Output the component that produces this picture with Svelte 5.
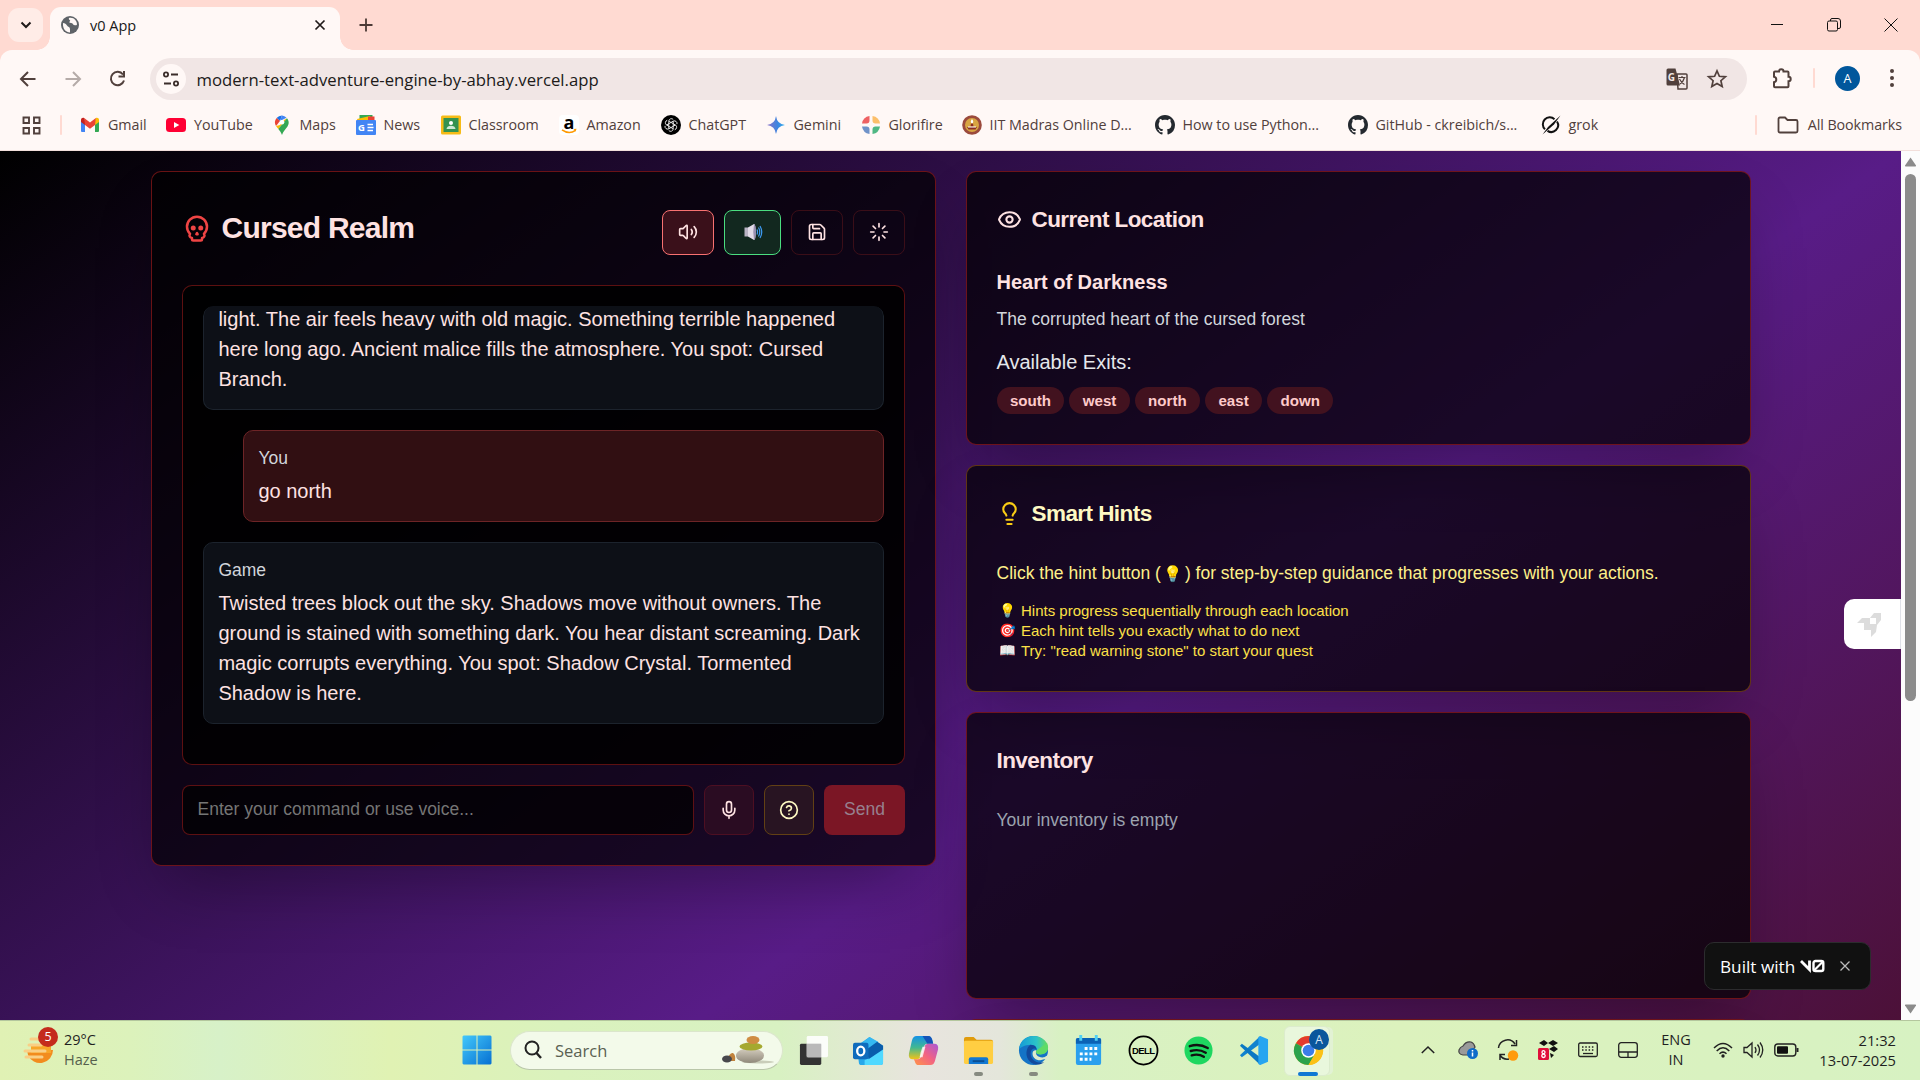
<script>
  const bookmarks = [
    { icon: 'gmail', label: 'Gmail', width: 86 },
    { icon: 'youtube', label: 'YouTube', width: 105.5 },
    { icon: 'maps', label: 'Maps', width: 84 },
    { icon: 'news', label: 'News', width: 85 },
    { icon: 'classroom', label: 'Classroom', width: 118 },
    { icon: 'amazon', label: 'Amazon', width: 102 },
    { icon: 'chatgpt', label: 'ChatGPT', width: 105 },
    { icon: 'gemini', label: 'Gemini', width: 95 },
    { icon: 'glorifire', label: 'Glorifire', width: 101 },
    { icon: 'iit', label: 'IIT Madras Online D...', width: 193 },
    { icon: 'github', label: 'How to use Python...', width: 193 },
    { icon: 'github', label: 'GitHub - ckreibich/s...', width: 193 },
    { icon: 'grok', label: 'grok', width: 80 }
  ];
  const exits = ['south', 'west', 'north', 'east', 'down'];
  const tips = [
    ['💡', 'Hints progress sequentially through each location'],
    ['🎯', 'Each hint tells you exactly what to do next'],
    ['📖', 'Try: "read warning stone" to start your quest']
  ];
  const apps = ['taskview', 'outlook', 'copilot', 'folder', 'edge', 'calendar', 'dell', 'spotify', 'vscode', 'chrome'];
</script>

{#snippet favicon(name)}
  <svg class="fav" viewBox="0 0 20 20">
    {#if name === 'gmail'}
      <path d="M1 4.500V16a1 1 0 0 0 1 1h3V9z" fill="#4285f4" />
      <path d="M19 4.500V16a1 1 0 0 1-1 1h-3V9z" fill="#34a853" />
      <path d="M15 5v5l4-3V4.800c0-1.800-2-2.600-3.300-1.600z" fill="#fbbc04" />
      <path d="M1 4.800V7l4 3V5l-.7-1.800C3 2.200 1 3 1 4.800z" fill="#c5221f" />
      <path d="M4.200 3.100 10 7.500l5.800-4.400L15 10l-5 3.800L5 10z" fill="#ea4335" />
    {:else if name === 'youtube'}
      <rect x="0" y="3" width="20" height="14" rx="3.500" fill="#ff0033" />
      <path d="m8 7 5.300 3L8 13z" fill="#fff" />
    {:else if name === 'maps'}
      <path d="M10 .5a7 7 0 0 0-5.400 2.500L8 6z" fill="#1a73e8" />
      <path d="M10 .5 8 6l6.500-3.300A7 7 0 0 0 10 .5z" fill="#4285f4" />
      <path d="M4.600 3A7 7 0 0 0 4 11l4-5z" fill="#ea4335" />
      <path d="M4 11c.7 1.200 1.500 2.100 2.300 3L15 3.200l-2.700 1.500L8 10z" fill="#fbbc04" />
      <path d="M15 3.200 6.300 14c1.700 2 2.700 3.300 3.700 6 1.200-4 3.500-5.500 5.500-8.500A7 7 0 0 0 15 3.200z" fill="#34a853" />
      <circle cx="10" cy="7.200" r="2.300" fill="#fff" />
    {:else if name === 'news'}
      <rect x="3.500" y="0" width="13" height="8" fill="#34a853" />
      <path d="m1 4 13-3 2 6H2z" fill="#fbbc04" /><path d="M12 1.500h6.500V7H12z" fill="#ea4335" />
      <rect x="0" y="5" width="20" height="15" rx="1" fill="#4285f4" />
      <text x="2" y="15.800" class="news-g">G</text>
      <path d="M11.500 9.500H17M11.500 12.500h6M11.500 15.500H17" stroke="#fff" stroke-width="1.500" />
    {:else if name === 'classroom'}
      <rect width="20" height="19" y=".5" rx="1.500" fill="#f6bb16" /><rect x="2.500" y="3" width="15" height="14" fill="#34924f" />
      <circle cx="10" cy="8" r="2" fill="#fff" /><path d="M5.500 14c0-4.500 9-4.500 9 0z" fill="#cfe8d5" />
    {:else if name === 'amazon'}
      <rect width="20" height="20" rx="4" fill="#fff" />
      <text x="10" y="13.500" text-anchor="middle" class="amazon-a">a</text>
      <path d="M3 14.800q7 5 13.500.6" stroke="#ff9900" stroke-width="1.600" fill="none" /><path d="m14.500 14 3-.2-.8 2.700" fill="#ff9900" />
    {:else if name === 'chatgpt'}
      <circle cx="10" cy="10" r="10" fill="#000" />
      <g fill="none" stroke="#fff" stroke-width=".8">
        {#each [0, 60, 120, 180, 240, 300] as a}
          <path transform="rotate({a} 10 10)" d="M7.800 8.700V6a2.600 2.600 0 0 1 4.400-1.600M7.800 6.200l4.400 2.500" />
        {/each}
      </g>
    {:else if name === 'gemini'}
      <defs><linearGradient id="gem"><stop offset="0" stop-color="#8b72c8" /><stop offset=".6" stop-color="#3b86e0" /><stop offset="1" stop-color="#31b0ee" /></linearGradient></defs>
      <path d="M10 1q1 8 9 9-8 1-9 9-1-8-9-9 8-1 9-9z" fill="url(#gem)" />
    {:else if name === 'glorifire'}
      <path d="M8.500 1v4.500a3 3 0 0 1-3 3H1q1-6.500 7.500-7.500z" fill="#ee6163" /><path d="M11.500 1v4.500a3 3 0 0 0 3 3H19q-1-6.500-7.500-7.500z" fill="#fcbf6a" />
      <path d="M8.500 19v-4.500a3 3 0 0 0-3-3H1q1 6.500 7.500 7.500z" fill="#6f92c8" /><path d="M11.500 19v-4.500a3 3 0 0 1 3-3H19q-1 6.500-7.500 7.500z" fill="#50b783" />
    {:else if name === 'iit'}
      <circle cx="10" cy="10" r="9.800" fill="#9b4a3c" /><circle cx="10" cy="10" r="7" fill="#d8a542" />
      <path d="M5 12h10l-1.500 2.500h-7zM8.500 11.500h3l-.5-3h-2z" fill="#8a2d22" /><path d="M10 4q2.500 3 0 4.500-2.500-1.500 0-4.500z" fill="#fff" /><path d="M6 12h8" stroke="#fff" />
    {:else if name === 'github'}
      <path fill="#24292f" transform="scale(1.250)" d="M8 0C3.580 0 0 3.580 0 8c0 3.540 2.290 6.530 5.470 7.590.4.070.55-.17.55-.38 0-.19-.010-.82-.010-1.490-2.010.37-2.530-.49-2.690-.94-.09-.23-.48-.94-.82-1.130-.28-.15-.68-.52-.010-.53.63-.010 1.080.58 1.230.82.72 1.210 1.870.87 2.330.66.070-.52.28-.87.51-1.070-1.780-.2-3.640-.89-3.640-3.950 0-.87.31-1.590.82-2.150-.08-.2-.36-1.020.08-2.120 0 0 .67-.21 2.200.82.64-.18 1.320-.27 2-.27s1.360.09 2 .27c1.530-1.040 2.200-.82 2.200-.82.44 1.100.16 1.920.08 2.120.51.56.82 1.270.82 2.150 0 3.070-1.870 3.750-3.650 3.950.29.25.54.73.54 1.480 0 1.070-.010 1.930-.010 2.200 0 .21.150.46.550.38A8.010 8.010 0 0 0 16 8c0-4.420-3.580-8-8-8z" />
    {:else if name === 'grok'}
      <path d="M13.500 4.200A6.800 6.800 0 0 0 4 14.300M6.500 15.800A6.800 6.800 0 0 0 16 6.500" fill="none" stroke="#111" stroke-width="2" />
      <path d="M1.500 19.500 7 12 19.500.5 13 9.500z" fill="#111" />
    {/if}
  </svg>
{/snippet}

{#snippet appicon(name)}
  <svg class="appicon" viewBox="0 0 32 32">
    {#if name === 'taskview'}
      <rect x="2" y="9" width="22" height="22" rx="1.500" fill="#333" /><rect x="9" y="1" width="22" height="22" rx="1.500" fill="#fff" opacity=".88" /><path d="M9 9h15v14H9z" fill="#b9b9b9" />
    {:else if name === 'outlook'}
      <path d="M4 11 17 2l14 9v17a3 3 0 0 1-3 3H9a3 3 0 0 1-3-3z" fill="#28a8ea" /><path d="m6 11 11-9 9 5-14 10z" fill="#35b8f1" /><path d="m12 26 19-15v17a3 3 0 0 1-3 3H12z" fill="#50d9ff" /><path d="m14 15 11-8 6 4v4L16 25z" fill="#0a5dab" />
      <rect x="0" y="8" width="16" height="17" rx="2" fill="#0f6cbd" /><ellipse cx="8" cy="16.500" rx="3.700" ry="4.500" fill="none" stroke="#fff" stroke-width="2.400" />
    {:else if name === 'copilot'}
      <defs>
        <linearGradient id="cp1" x1="0" y1="0" x2="0" y2="1"><stop offset="0" stop-color="#1591e8" /><stop offset=".5" stop-color="#42b890" /><stop offset="1" stop-color="#f2c318" /></linearGradient>
        <linearGradient id="cp2" x1="0" y1="1" x2="1" y2="0"><stop offset="0" stop-color="#ff9548" /><stop offset=".5" stop-color="#f26383" /><stop offset="1" stop-color="#a958d8" /></linearGradient>
      </defs>
      <path d="M9 1h12q3 0 4 4l1 4h-6q-3 0-4 4l-3 9q-1 3-4 3H5q-5 0-4-6L4 6q1-5 5-5z" fill="url(#cp1)" />
      <path d="M9 1h12q3 0 4 4l1 4h-6L15 1z" fill="#1554b8" />
      <path d="M23 31H11q-3 0-4-4l-1-2h4q3 0 4-4l3-9q1-3 4-3h6q5 0 4 6l-3 11q-1 5-5 5z" fill="url(#cp2)" />
      <path d="m13 18 2-6h3l-3 11h-3z" fill="#fff" opacity=".8" />
    {:else if name === 'folder'}
      <path d="M1 4q0-2 2-2h8l3 3h15q2 0 2 2v5H1z" fill="#e09c0c" /><rect x="1" y="6" width="30" height="24" rx="1.500" fill="#ffce42" /><path d="M6 30v-5q0-2 2-2h16q2 0 2 2v5z" fill="#1278d2" /><path d="M10 27h12" stroke="#0a4f94" stroke-width="2" />
    {:else if name === 'edge'}
      <defs><linearGradient id="ed"><stop offset="0" stop-color="#149ad8" /><stop offset=".6" stop-color="#2bc3c8" /><stop offset="1" stop-color="#69dd58" /></linearGradient></defs>
      <circle cx="16" cy="16" r="15" fill="#1473c6" /><path d="M1 15C2 6 8 1 16 1c9 0 15 6 15 12 0 5-4 7-8 7-4 0-5-2-4-4 1-3-1-6-6-6-6 0-11 3-12 5z" fill="url(#ed)" />
      <path d="M13 10c-5 3-6 12-1 17 4 4 10 5 15 1-8 2-14-3-14-9 0-3 2-5 4-5 2 0 2 2 2 2 1-3-2-6-6-6z" fill="#124a9c" /><path d="M19 16c-2 4 2 8 8 7l5-3v5l-5 0-4 1c-5 0-8-3-8-7 0-3 3-4 4-3z" fill="#dcebcd" /><path d="M31 13c0 5-4 7-8 7-4 0-5-2-4-4l11-8z" fill="#5fdb66" />
    {:else if name === 'calendar'}
      <rect x="3" y="3" width="26" height="28" rx="2" fill="#2aa0ee" /><path d="M3 9V5q0-2 2-2h22q2 0 2 2v4z" fill="#0b62b5" /><path d="M8 0v6M24 0v6" stroke="#4fd0f5" stroke-width="3" />
      <path d="M12 14h13M7 19.500h18M7 25h12" stroke="#fff" stroke-width="3" stroke-dasharray="3 2" />
    {:else if name === 'dell'}
      <circle cx="16" cy="16" r="14.500" fill="none" stroke="#000" stroke-width="1.800" /><text x="15.700" y="19.800" text-anchor="middle" class="dell">DELL</text>
    {:else if name === 'spotify'}
      <circle cx="16" cy="16" r="14.500" fill="#1ed760" /><path d="M7 11.500q10-3 18.500 2M8 16.500q8.500-2.500 15.500 1.800M9 21q7-2 12.500 1.500" fill="none" stroke="#111" stroke-width="2.500" stroke-linecap="round" />
    {:else if name === 'vscode'}
      <path d="M2 21 23 1v8L4 23z" fill="#1083cf" /><path d="M2 11 4 9l19 14v8z" fill="#0a78c4" /><path d="m23 1 8 3.500v23L23 31l-2-1V2z" fill="#27a5f0" />
    {:else if name === 'chrome'}
      <circle cx="16" cy="16" r="15" fill="#fbc116" /><path d="M16 16 3 8.500A15 15 0 0 1 29 8.500z" fill="#e33b2e" /><path d="M3 8.500A15 15 0 0 0 16 31l6.500-11.500L16 16z" fill="#2ba24c" /><path d="M16 8.500h13A15 15 0 0 1 16 31l6.500-11z" fill="#fbc116" />
      <circle cx="16" cy="16" r="7.500" fill="#fff" /><circle cx="16" cy="16" r="6" fill="#3b7de8" />
    {/if}
  </svg>
{/snippet}

<div class="screen">
  <header class="tabs">
    <button class="tabsearch" aria-label="Search tabs"><svg width="12" height="12" viewBox="0 0 12 12"><path d="m1.500 3.500 4.500 4.500 4.500-4.500" fill="none" stroke="#201a19" stroke-width="2" /></svg></button>
    <div class="tab">
      <svg width="18" height="18" viewBox="0 0 18 18"><circle cx="9" cy="9" r="9" fill="#5f6368" /><path d="M2 7c2 0 3 1 4 2.500S9 11 9 13v3.500C5 16.500 1.500 13 2 7zM8 2c5-1 8 3 8 6.500-1 1.500-2 .5-3 .5s-1-2-3-2-2-1-1-2-2-1-1-3z" fill="#fff8f6" /></svg>
      <span>v0 App</span>
      <svg class="tabclose" width="12" height="12" viewBox="0 0 12 12"><path d="m1.500 1.500 9 9m0-9-9 9" stroke="#201a19" stroke-width="1.700" /></svg>
    </div>
    <svg class="plus" width="14" height="14" viewBox="0 0 14 14"><path d="M7 .5v13M.5 7h13" stroke="#4c3a36" stroke-width="1.800" /></svg>
    <div class="wincontrols">
      <svg width="14" height="14" viewBox="0 0 14 14"><path d="M1 6.500h12" stroke="#111" /></svg>
      <svg width="14" height="14" viewBox="0 0 14 14" fill="none" stroke="#111"><rect x=".5" y="3" width="10" height="10" rx="1.500" /><path d="M3.500 3V2q0-1.500 1.500-1.500h6q2.500 0 2.500 2.500v6q0 1.500-1.500 1.500h-1" /></svg>
      <svg width="14" height="14" viewBox="0 0 14 14"><path d="m.5.5 13 13m0-13-13 13" stroke="#111" /></svg>
    </div>
  </header>

  <div class="toolbar">
    <nav class="navicons">
      <svg width="20" height="20" viewBox="0 0 20 20" fill="none" stroke="#51403c" stroke-width="2"><path d="M17.500 10H3M10 3l-7 7 7 7" /></svg>
      <svg width="20" height="20" viewBox="0 0 20 20" fill="none" stroke="#b5aba8" stroke-width="2"><path d="M2.500 10H17M10 3l7 7-7 7" /></svg>
      <svg width="20" height="20" viewBox="0 0 20 20" fill="none" stroke="#51403c" stroke-width="2"><path d="M15 5.500a6.700 6.700 0 1 0 1 6M16 2v5.500h-5.500" /></svg>
    </nav>
    <div class="omnibox">
      <span class="siteinfo"><svg width="18" height="18" viewBox="0 0 18 18" fill="none" stroke="#3b2d2a" stroke-width="1.800"><circle cx="4" cy="4.500" r="2.100" /><path d="M9 4.500h7M2 13.500h7" /><circle cx="14" cy="13.500" r="2.100" /></svg></span>
      <span class="url">modern-text-adventure-engine-by-abhay.vercel.app</span>
      <svg class="translate" width="22" height="22" viewBox="0 0 22 22"><path d="M11 6h9q1 0 1 1v13q0 1-1 1h-8z" fill="none" stroke="#51403c" stroke-width="1.500" /><path d="M2 .5h7.500l4.500 17H2q-1.500 0-1.500-1.500V2Q.5.500 2 .5z" fill="#51403c" /><text x="1.800" y="13" class="gt">G</text><path d="M12.500 9.500h7M16 8v1.500M18.500 9.500q-1 4-4.500 6.500M13.500 11q2 4 5 5.500" fill="none" stroke="#51403c" stroke-width="1.200" /></svg>
      <svg width="20" height="20" viewBox="0 0 20 20"><path d="m10 1.800 2.400 5.500 6 .5-4.500 3.900 1.300 5.900L10 14.500l-5.200 3.100 1.300-5.900-4.500-3.900 6-.5z" fill="none" stroke="#51403c" stroke-width="1.700" /></svg>
    </div>
    <svg class="ext" width="24" height="24" viewBox="0 0 24 24"><path d="M4 6.500q0-1 1-1h4a2 2 0 0 1 4.500 0h4q1 0 1 1v4.300a2 2 0 0 1 0 4.400v5q0 1-1 1H5q-1 0-1-1v-4a2.800 2.800 0 0 0 0-5.500z" fill="none" stroke="#51403c" stroke-width="2" /></svg>
    <i class="sep"></i>
    <span class="avatar">A</span>
    <svg class="kebab" width="6" height="20" viewBox="0 0 6 20" fill="#51403c"><circle cx="3" cy="3" r="2" /><circle cx="3" cy="10" r="2" /><circle cx="3" cy="17" r="2" /></svg>
  </div>

  <div class="bookmarks">
    <svg class="grid4" width="19" height="19" viewBox="0 0 19 19" fill="none" stroke="#51403c" stroke-width="1.900"><path d="M1.500 1.500h5.500V7H1.500zM12 1.500h5.500V7H12zM1.500 12h5.500v5.500H1.500zM12 12h5.500v5.500H12z" /></svg>
    <i class="sep"></i>
    <div class="marks">
      {#each bookmarks as b}
        <a class="mark" style="width: {b.width}px" href="#{b.icon}">{@render favicon(b.icon)}<span>{b.label}</span></a>
      {/each}
    </div>
    <i class="sep"></i>
    <svg class="allicon" width="22" height="18" viewBox="0 0 22 18"><path d="M1.500 3q0-1.500 1.500-1.500h5l2.500 2.500H19q1.500 0 1.500 1.500V15q0 1.500-1.500 1.500H3q-1.500 0-1.500-1.500z" fill="none" stroke="#51403c" stroke-width="1.800" /></svg>
    <span class="all">All Bookmarks</span>
  </div>

  <div class="view">
    <main class="page">
      <section class="card game">
        <div class="gamehead">
          <h1>
            <svg class="skull" viewBox="0 0 24 24"><path d="m12.500 17-.5-1-.5 1h1z" /><path d="M15 22a1 1 0 0 0 1-1v-1a2 2 0 0 0 1.560-3.250 8 8 0 1 0-11.120 0A2 2 0 0 0 8 20v1a1 1 0 0 0 1 1z" /><circle cx="15" cy="12" r="1" /><circle cx="9" cy="12" r="1" /></svg>
            Cursed Realm
          </h1>
          <div class="actions">
            <button class="ibtn red" aria-label="Sound"><svg class="ic" viewBox="0 0 24 24"><path d="M11 4.702a.705.705 0 0 0-1.203-.498L6.413 7.587A1.400 1.400 0 0 1 5.416 8H3a1 1 0 0 0-1 1v6a1 1 0 0 0 1 1h2.416a1.400 1.400 0 0 1 .997.413l3.383 3.384A.705.705 0 0 0 11 19.298z" /><path d="M16 9a5 5 0 0 1 0 6M19.364 18.364a9 9 0 0 0 0-12.728" /></svg></button>
            <button class="ibtn green" aria-label="Narration">
              <svg width="20" height="20" viewBox="0 0 20 20"><path d="M1.500 5.500h4v9h-4z" fill="#b9b3c4" /><path d="m5 5.500 6-3.500q1.500 0 1.500 8T11 18l-6-3.500z" fill="#e2dbe8" /><path d="M11 2q2 1 2 8t-2 8q-1.500-8 0-16z" fill="#998fb0" /><path d="M14 7.500q1 2.500 0 5M15.500 5.500q2.500 4.500 0 9M17 4q3.500 6 0 12" fill="none" stroke="#3d9af2" stroke-width="1.200" /></svg>
            </button>
            <button class="ibtn" aria-label="Save"><svg class="ic" viewBox="0 0 24 24"><path d="M15.200 3a2 2 0 0 1 1.400.6l3.800 3.800a2 2 0 0 1 .6 1.400V19a2 2 0 0 1-2 2H5a2 2 0 0 1-2-2V5a2 2 0 0 1 2-2z" /><path d="M17 21v-7a1 1 0 0 0-1-1H8a1 1 0 0 0-1 1v7M7 3v4a1 1 0 0 0 1 1h7" /></svg></button>
            <button class="ibtn" aria-label="Load"><svg class="ic" viewBox="0 0 24 24"><path d="M12 2v4m4.200 1.800 2.900-2.900M18 12h4m-5.800 4.200 2.900 2.900M12 18v4m-7.100-2.900 2.900-2.900M2 12h4M4.900 4.900l2.900 2.900" /></svg></button>
          </div>
        </div>
        <div class="chat">
          <div class="scroller">
            <article class="msg cut"><p>light. The air feels heavy with old magic. Something terrible happened here long ago. Ancient malice fills the atmosphere. You spot: Cursed Branch.</p></article>
            <article class="msg you"><small>You</small><p>go north</p></article>
            <article class="msg"><small>Game</small><p>Twisted trees block out the sky. Shadows move without owners. The ground is stained with something dark. You hear distant screaming. Dark magic corrupts everything. You spot: Shadow Crystal. Tormented Shadow is here.</p></article>
          </div>
        </div>
        <div class="form">
          <div class="field">Enter your command or use voice...</div>
          <button class="sq mic" aria-label="Voice"><svg class="ic" viewBox="0 0 24 24"><path d="M12 2a3 3 0 0 0-3 3v7a3 3 0 0 0 6 0V5a3 3 0 0 0-3-3Z" /><path d="M19 10v2a7 7 0 0 1-14 0v-2M12 19v3" /></svg></button>
          <button class="sq hint" aria-label="Hint"><svg class="ic" viewBox="0 0 24 24"><circle cx="12" cy="12" r="10" /><path d="M9.090 9a3 3 0 0 1 5.830 1c0 2-3 3-3 3M12 17h.010" /></svg></button>
          <button class="send">Send</button>
        </div>
      </section>

      <div class="side">
        <section class="card location">
          <h2><svg class="hic" viewBox="0 0 24 24"><path d="M2.062 12.348a1 1 0 0 1 0-.696 10.750 10.750 0 0 1 19.876 0 1 1 0 0 1 0 .696 10.750 10.750 0 0 1-19.876 0" /><circle cx="12" cy="12" r="3" /></svg>Current Location</h2>
          <h3>Heart of Darkness</h3>
          <p class="desc">The corrupted heart of the cursed forest</p>
          <p class="exits">Available Exits:</p>
          <div class="tags">{#each exits as e}<span>{e}</span>{/each}</div>
        </section>
        <section class="card hints">
          <h2><svg class="hic bulb" viewBox="0 0 24 24"><path d="M15 14c.2-1 .7-1.700 1.500-2.500 1-.9 1.500-2.200 1.500-3.500A6 6 0 0 0 6 8c0 1 .2 2.200 1.500 3.500.7.7 1.300 1.500 1.500 2.500M9 18h6M10 22h4" /></svg>Smart Hints</h2>
          <p class="click">Click the hint button (<b class="emoji">💡</b>) for step-by-step guidance that progresses with your actions.</p>
          <ul>{#each tips as [glyph, tip]}<li><b class="emoji">{glyph}</b>{tip}</li>{/each}</ul>
        </section>
        <section class="card inventory">
          <h2>Inventory</h2>
          <p class="empty">Your inventory is empty</p>
        </section>
        <section class="card next"></section>
      </div>

      <div class="rocket"><svg width="24" height="24" viewBox="0 0 24 24"><path d="M17 0h7v7l-4 5-1 7-5 5v-7H7v-7H0l5-5h8zM13 5v6h6V5z" fill="#dcdcdc" fill-rule="evenodd" /></svg></div>
      <div class="built">
        <span>Built with</span>
        <svg width="25" height="14" viewBox="0 0 25 14"><path d="m1 2 8.500 8.500V1.500" fill="none" stroke="#fff" stroke-width="2.800" /><rect x="13.500" y="2" width="9.800" height="10" rx="2" fill="none" stroke="#fff" stroke-width="2.400" /><path d="m13.500 12 10-10" stroke="#fff" stroke-width="2.200" /></svg>
        <svg class="bx" width="10" height="10" viewBox="0 0 10 10"><path d="m.5.5 9 9m0-9-9 9" stroke="#bbb" stroke-width="1.300" /></svg>
      </div>
    </main>
    <div class="scrollbar">
      <svg width="13" height="10" viewBox="0 0 13 10"><path d="M6.500.5 12 8.500q.5 1-1 1H2q-1.500 0-1-1z" fill="#8b8b8b" /></svg>
      <i></i>
      <svg class="down" width="13" height="10" viewBox="0 0 13 10"><path d="M6.500 9.500 12 1.500q.5-1-1-1H2q-1.500 0-1 1z" fill="#8b8b8b" /></svg>
    </div>
  </div>

  <footer class="taskbar">
    <div class="weather">
      <svg width="30" height="30" viewBox="0 0 30 30"><path d="M2 15h26a13 13 0 0 1-25 5z" fill="#f28c1e" /><path d="M6 9h20v9H6z" fill="#f7a62a" /><path d="M6 4h10M4 10h12M0 16h20M1 22h16" stroke="#f9cf86" stroke-width="3" stroke-linecap="round" /></svg>
      <b>5</b>
      <div><span>29°C</span><span class="dim">Haze</span></div>
    </div>
    <div class="dock">
      <span class="app"><svg width="30" height="30" viewBox="0 0 30 30"><defs><linearGradient id="win" x2="1" y2="1"><stop offset="0" stop-color="#43c8fb" /><stop offset="1" stop-color="#0670d2" /></linearGradient></defs><path d="M1.500.5h13v14H.5v-13zM15.500.5h13l1 1v13h-14zM.5 15.500h14v14h-13l-1-1zM15.500 15.500h14v13l-1 1h-13z" fill="url(#win)" /></svg></span>
      <div class="search">
        <svg width="20" height="20" viewBox="0 0 20 20"><circle cx="9" cy="8" r="6.500" fill="none" stroke="#222" stroke-width="2" /><path d="m13.500 13 4.500 5" stroke="#222" stroke-width="2.400" /></svg>
        <span>Search</span>
        <svg class="stones" width="52" height="28" viewBox="0 0 52 28">
          <defs><linearGradient id="stn" x2="0" y2="1"><stop offset="0" stop-color="#d6cfc0" /><stop offset="1" stop-color="#8f887a" /></linearGradient></defs>
          <ellipse cx="36" cy="26" rx="16" ry="1.500" fill="#c9cdb9" /><ellipse cx="28" cy="19.500" rx="14" ry="7.500" fill="url(#stn)" /><ellipse cx="29" cy="10.500" rx="11.500" ry="4" fill="#a5a92f" /><ellipse cx="31" cy="4" rx="6.500" ry="4" fill="#cf8d43" /><path d="M4 25q4-9 7-8 3 2 2 8z" fill="#c1833c" /><ellipse cx="5" cy="23" rx="5" ry="3.500" fill="#47474c" />
        </svg>
      </div>
      {#each apps as a}
        <span class="app" class:running={a === 'folder' || a === 'edge'} class:active={a === 'chrome'}>
          {@render appicon(a)}
          {#if a === 'chrome'}<b>A</b>{/if}
        </span>
      {/each}
    </div>
    <div class="tray">
      <span><svg width="14" height="14" viewBox="0 0 14 14"><path d="m.8 10 6.200-6 6.200 6" fill="none" stroke="#222" stroke-width="1.500" /></svg></span>
      <span><svg width="20" height="20" viewBox="0 0 20 20"><path d="M5 15q-5-1-4-5 1-3 4-4 3-5 8-4 3 1 4 5l-6 8z" fill="#9a9a9a" stroke="#444" stroke-width="1.200" /><circle cx="14.500" cy="13.500" r="5.500" fill="#0f6cc9" /><path d="M14.500 12.500v4M14.500 10v1.500" stroke="#fff" stroke-width="1.500" /></svg></span>
      <span><svg width="22" height="22" viewBox="0 0 22 22"><path d="M1.500 9A9 9 0 0 1 18 5M19.500 1v5.500H14M3 21v-5.500h5M3 16q3 5 9 4" fill="none" stroke="#222" stroke-width="1.500" /><circle cx="16" cy="16.500" r="5.200" fill="#ff9a0c" /></svg></span>
      <span><svg width="20" height="22" viewBox="0 0 20 22"><path d="m1 4 5-3 4 3 5-3 5 3-5 3-5-3-4 3zM11 10l5-3 4 3-4 3zM12 14l4 2-3 3z" fill="#111" /><rect x="0" y="9" width="11" height="12" rx="1.500" fill="#e00f3a" /><circle cx="5.500" cy="13.200" r="1.500" fill="none" stroke="#fff" stroke-width="1.300" /><circle cx="5.500" cy="16.800" r="1.700" fill="none" stroke="#fff" stroke-width="1.300" /></svg></span>
      <span><svg width="20" height="16" viewBox="0 0 20 16"><rect x=".7" y="1" width="18.600" height="13.500" rx="1.500" fill="none" stroke="#222" stroke-width="1.300" /><path d="M4 5h13M4 8h13" stroke="#222" stroke-width="1.500" stroke-dasharray="1.500 1.800" /><path d="M5 11.500h10" stroke="#222" stroke-width="1.300" /></svg></span>
      <span><svg width="20" height="16" viewBox="0 0 20 16"><rect x=".7" y=".7" width="18.600" height="14.600" rx="2.500" fill="none" stroke="#222" stroke-width="1.300" /><path d="M1 10h18M10 10v5" stroke="#222" stroke-width="1.300" /></svg></span>
    </div>
    <div class="lang"><span>ENG</span><span>IN</span></div>
    <div class="status">
      <svg width="20" height="16" viewBox="0 0 20 16"><path d="M1 6Q10-3 19 6M3.700 9Q10 2.500 16.300 9M6.500 11.800q3.500-3.300 7 0" fill="none" stroke="#222" stroke-width="1.500" /><circle cx="10" cy="14" r="1.700" fill="#222" /></svg>
      <svg width="21" height="18" viewBox="0 0 21 18"><path d="M1 6.500h3L9 2v14l-5-4.500H1z" fill="none" stroke="#222" stroke-width="1.300" /><path d="M12 6q2 3 0 6M14.500 3.500q4 5.500 0 11M17 1.500q5.500 7.500 0 15" fill="none" stroke="#222" stroke-width="1.300" /></svg>
      <svg width="25" height="14" viewBox="0 0 25 14"><rect x=".8" y="1" width="21" height="12" rx="3" fill="none" stroke="#222" stroke-width="1.400" /><rect x="3" y="3.300" width="11" height="7.400" rx="1" fill="#111" /><path d="M23.500 5v4" stroke="#222" stroke-width="2" /></svg>
    </div>
    <div class="clock"><span>21:32</span><span>13-07-2025</span></div>
  </footer>
</div>

<style>
  :global(body) { margin: 0; overflow: hidden; }
  .screen { width: 1920px; height: 1080px; display: flex; flex-direction: column; overflow: hidden; font-family: "Open Sans", "Noto Sans", sans-serif; color: #201a19; background: #ffdad2; }
  .screen * { box-sizing: border-box; }
  svg { display: block; flex: none; overflow: visible; }
  button { padding: 0; margin: 0; border: 0; font: inherit; }
  h1, h2, h3, p, ul { margin: 0; padding: 0; }

  /* browser frame */
  .tabs { height: 50px; display: flex; align-items: center; padding-left: 8px; flex: none; }
  .tabsearch { width: 35px; height: 34px; border-radius: 11px; background: #ffece7; display: grid; place-items: center; }
  .tab { position: relative; align-self: flex-end; width: 290px; height: 43px; margin-left: 7px; padding: 0 14px 7px 11px; border-radius: 11px 11px 0 0; background: #fff8f6; display: flex; align-items: center; font-size: 14.500px; }
  .tab::before, .tab::after { content: ""; position: absolute; bottom: 0; width: 13px; height: 13px; }
  .tab::before { left: -13px; background: radial-gradient(circle at 0 0, transparent 12.500px, #fff8f6 13px); }
  .tab::after { right: -13px; background: radial-gradient(circle at 100% 0, transparent 12.500px, #fff8f6 13px); }
  .tab span { margin-left: 11px; }
  .tabclose { margin-left: auto; }
  .plus { margin-left: 18.500px; }
  .wincontrols { margin-left: auto; display: flex; gap: 43px; padding-right: 22px; }
  .toolbar { height: 56px; flex: none; background: #fff8f6; border-radius: 12px 12px 0 0; display: flex; align-items: center; padding-left: 18px; }
  .navicons { display: flex; gap: 25px; width: 132px; padding-top: 1px; }
  .omnibox { flex: none; width: 1597px; height: 42px; margin-top: 2px; border-radius: 21px; background: #f1e6e5; display: flex; align-items: center; padding: 0 20px 0 6px; }
  .siteinfo { width: 30px; height: 30px; border-radius: 50%; background: #fff8f6; display: grid; place-items: center; }
  .url { margin-left: 10.500px; font-size: 16.720px; }
  .translate { margin-left: auto; margin-right: 19px; }
  .gt { font: bold 10px "Open Sans", sans-serif; fill: #f1e6e5; }
  .ext { margin-left: 22.500px; }
  .sep { width: 2px; height: 20px; background: #ffdad2; border-radius: 1px; flex: none; }
  .toolbar .sep { margin-left: 19px; }
  .avatar { width: 25px; height: 25px; margin-left: 20.500px; border-radius: 50%; background: #00579c; color: #fff; font-size: 12.500px; display: grid; place-items: center; }
  .kebab { margin-left: 29px; }
  .bookmarks { height: 45px; flex: none; background: #fff8f6; border-bottom: 1px solid #f2dfdb; display: flex; align-items: center; padding: 0 18px 6px 22px; color: #51403c; font-size: 14.300px; }
  .bookmarks .sep { margin-left: 19px; }
  .marks { display: flex; margin-left: 18px; margin-right: auto; }
  .mark { display: flex; align-items: center; gap: 8px; white-space: nowrap; color: inherit; text-decoration: none; letter-spacing: -.02px; }
  .mark span, .all { margin-bottom: 1px; }
  .fav { width: 20px; height: 20px; }
  .allicon { margin-left: 20px; }
  .all { margin-left: 9px; letter-spacing: -.08px; }
  .news-g { font: bold 9.500px "Open Sans", sans-serif; fill: #fff; }
  .amazon-a { font: bold 18px "Open Sans", sans-serif; fill: #000; }

  /* game page */
  .view { height: 869px; flex: none; display: flex; }
  .page { position: relative; width: 1901px; height: 869px; overflow: hidden; padding: 20px 0 0 151px; display: flex; gap: 30px; align-items: flex-start; font-family: "Liberation Sans", Arial, sans-serif; background: linear-gradient(to bottom right, #000, #581c87, #450a0a) 0 0 / 1901px 1370px no-repeat; }
  .card { border: 1px solid rgba(153, 27, 27, .68); border-radius: 10px; background: rgba(0, 0, 0, .7); box-shadow: 0 31px 62px -15px rgba(0, 0, 0, .3); padding: 30px 30px 30px 29.500px; }
  .game { width: 785px; height: 695px; padding-left: 30px; }
  .gamehead { height: 83px; display: flex; justify-content: space-between; align-items: flex-start; padding-top: 8px; }
  h1 { display: flex; align-items: center; gap: 9.500px; height: 30px; margin-top: 3px; font-size: 30px; line-height: 30px; letter-spacing: -.75px; color: #fee2e2; }
  .skull { width: 30px; height: 30px; fill: none; stroke: #ef4444; stroke-width: 2; stroke-linecap: round; stroke-linejoin: round; }
  .actions { display: flex; gap: 10px; }
  .ibtn { width: 52px; height: 45px; padding-bottom: 1px; border: 1px solid rgba(127, 29, 29, .4); border-radius: 8px; background: transparent; color: #fee2e2; display: grid; place-items: center; }
  .ibtn.red { border-color: #f87171; background: #3a101a; }
  .ibtn.green { width: 57px; border-color: #4ade80; background: #12281f; }
  .ic { width: 20px; height: 20px; fill: none; stroke: currentColor; stroke-width: 2; stroke-linecap: round; stroke-linejoin: round; }
  .chat { height: 480px; padding: 20px; border: 1px solid rgba(153, 27, 27, .6); border-radius: 10px; background: rgba(0, 0, 0, .85); }
  .scroller { height: 438px; padding-bottom: 20px; border-radius: 10px; overflow: hidden; display: flex; flex-direction: column; gap: 20px; }
  .msg { flex: none; padding: 15px 15px 15px 14.400px; border: 1px solid #1c232d; border-radius: 10px; background: #0d1017; color: #fee2e2; font-size: 20px; line-height: 30px; }
  .msg small { display: block; font-size: 17.500px; line-height: 25px; margin-bottom: 5px; color: #d1d5db; }
  .msg.you { margin-left: 40px; background: #310f12; border-color: #6d2426; }
  .msg.cut { border-top: 0; padding-top: 0; height: 104px; }
  .msg.cut p { margin-top: -2px; }
  .form { margin-top: 20px; height: 50px; display: flex; gap: 10px; font-size: 17.500px; }
  .field { width: 512px; padding: 0 14.600px; line-height: 47px; border: 1px solid rgba(153, 27, 27, .6); border-radius: 8px; background: rgba(0, 0, 0, .7); color: #757575; }
  .sq { width: 50px; border-radius: 8px; display: grid; place-items: center; }
  .mic { background: #2a0c22; border: 1px solid #4d0f22; color: #fee2e2; }
  .hint { background: #281422; border: 1px solid #624014; color: #fef9c3; }
  .send { flex: 1; border-radius: 8px; background: #7b1625; color: #97808f; line-height: 47px; padding-bottom: 2px; }
  .side { width: 785px; display: flex; flex-direction: column; gap: 20px; }
  h2 { display: flex; align-items: center; gap: 10px; height: 25px; margin-top: 5px; font-size: 22.500px; line-height: 25px; letter-spacing: -.5625px; color: #fee2e2; }
  .hic { width: 25px; height: 25px; fill: none; stroke: currentColor; stroke-width: 2; stroke-linecap: round; stroke-linejoin: round; }
  .bulb { color: #facc15; }
  .location { height: 274px; }
  .location h2 { margin-top: 4.500px; }
  h3 { margin-top: 35.500px; font-size: 20px; line-height: 30px; color: #fee2e2; }
  .desc { margin-top: 10px; font-size: 17.500px; line-height: 25px; color: #d1d5db; }
  .exits { margin-top: 15px; font-size: 20px; line-height: 30px; color: #e5e7eb; }
  .tags { display: flex; gap: 5px; margin-top: 10px; }
  .tags span { height: 27px; padding: 0 13.400px; border-radius: 14px; background: #42121f; color: #fecaca; font: bold 15.100px/27px "Liberation Sans", Arial, sans-serif; }
  .hints { height: 227px; border-color: rgba(133, 77, 14, .68); }
  .hints h2 { color: #fef9c3; }
  .click { margin-top: 35px; font-size: 17.500px; line-height: 25px; color: #fef08a; height: 25px; }
  .emoji { display: inline-block; text-align: center; font-weight: normal; font-family: "Noto Color Emoji", sans-serif; line-height: 1; }
  .click .emoji { width: 24px; font-size: 15.500px; }
  ul { list-style: none; margin-top: 15px; font-size: 15px; line-height: 20px; color: #fde047; }
  li { height: 20px; display: flex; align-items: center; }
  li .emoji { width: 24.500px; font-size: 13.500px; padding-right: 2px; }
  .inventory { height: 287px; }
  .empty { margin-top: 35px; font-size: 17.500px; line-height: 25px; color: #9ca3af; }
  .next { height: 200px; }
  .rocket { position: absolute; right: 0; top: 448px; width: 57px; height: 50px; padding: 14px 0 0 13px; border-radius: 10px 0 0 10px; background: #fff; border-right: 1px solid #dfe1e8; }
  .built { position: absolute; left: 1704px; top: 791px; width: 167px; height: 48px; padding-left: 15px; border: 1px solid #2c2c2e; border-radius: 10px; background: #111; color: #fff; display: flex; align-items: center; font: 17.200px "Open Sans", sans-serif; }
  .built svg { margin-left: 5px; }
  .built .bx { margin-left: 15px; }
  .scrollbar { width: 19px; background: #fcfcfc; display: flex; flex-direction: column; align-items: center; padding: 6px 0; }
  .scrollbar i { width: 11px; height: 527px; margin-top: 7px; border-radius: 6px; background: #8b8b8b; }
  .scrollbar .down { margin-top: auto; }

  /* taskbar */
  .taskbar { height: 60px; flex: none; display: flex; align-items: center; padding-bottom: 1px; border-top: 1px solid #b4c79e; background: linear-gradient(90deg, #e0f1b4 0, #dcf2bb 130px, #d7f1c8 220px, #e0f2b3 390px, #daf2bd 560px, #d8f1c2 780px, #e8e4de 920px, #e4e6db 1000px, #d8f1c3 1060px, #dcf2bd 1400px, #d7f2c2 1920px); color: #1f1f1f; font-size: 14.500px; }
  .weather { position: relative; flex: none; width: 449px; display: flex; align-items: center; padding-left: 25px; }
  .weather b { position: absolute; left: 38px; top: -3px; width: 20px; height: 20px; border-radius: 50%; background: #c42b1c; color: #fff; font: 12.500px/20px "Open Sans", sans-serif; text-align: center; }
  .weather div { margin-left: 9px; }
  .weather span { display: block; line-height: 20px; }
  .weather .dim { color: #55604d; }
  .dock { display: flex; flex: none; align-items: center; width: 950px; }
  .app { position: relative; width: 55px; height: 54px; flex: none; display: grid; place-items: center; }
  .appicon { width: 31px; height: 31px; }
  .search { width: 273px; height: 39px; margin: 0 3px 0 6px; padding: 0 8px 0 12px; border-radius: 20px; background: #f3faea; border: 1px solid #dbe6cc; border-bottom-color: #b9c6a9; display: flex; align-items: center; flex: none; font-size: 16.500px; color: #5a6152; }
  .search span { margin-left: 12px; }
  .stones { margin-left: auto; }
  .running::after, .active::after { content: ""; position: absolute; left: 23px; bottom: 1px; width: 9px; height: 4px; border-radius: 2px; background: #868a80; }
  .active::before { content: ""; position: absolute; left: 3px; top: 3px; width: 44px; height: 48px; border-radius: 6px; background: #e9f7dc; border: 1px solid #dceccd; box-shadow: 4px 0 0 -1px #e2f2d4; }
  .active::after { left: 17px; width: 20px; background: #0f78d4; }
  .active .appicon { position: relative; }
  .active b { position: absolute; left: 28px; top: 6px; width: 20px; height: 21px; border-radius: 50%; background: #0a569c; color: #d6e6f5; font: 12px/21px "Open Sans", sans-serif; text-align: center; }
  .dell { font: bold 9.800px "Liberation Sans", sans-serif; letter-spacing: -.6px; }
  .tray { display: flex; flex: none; margin-left: 9px; }
  .tray span { width: 40px; height: 24px; display: grid; place-items: center; }
  .lang, .clock { display: flex; flex: none; flex-direction: column; align-items: center; line-height: 20px; white-space: nowrap; }
  .lang { width: 34px; margin-left: 11px; }
  .status { display: flex; flex: none; align-items: center; gap: 10px; margin-left: 20px; }
  .clock { margin-left: auto; margin-right: 24px; align-items: flex-end; font-size: 14.700px; }
</style>
